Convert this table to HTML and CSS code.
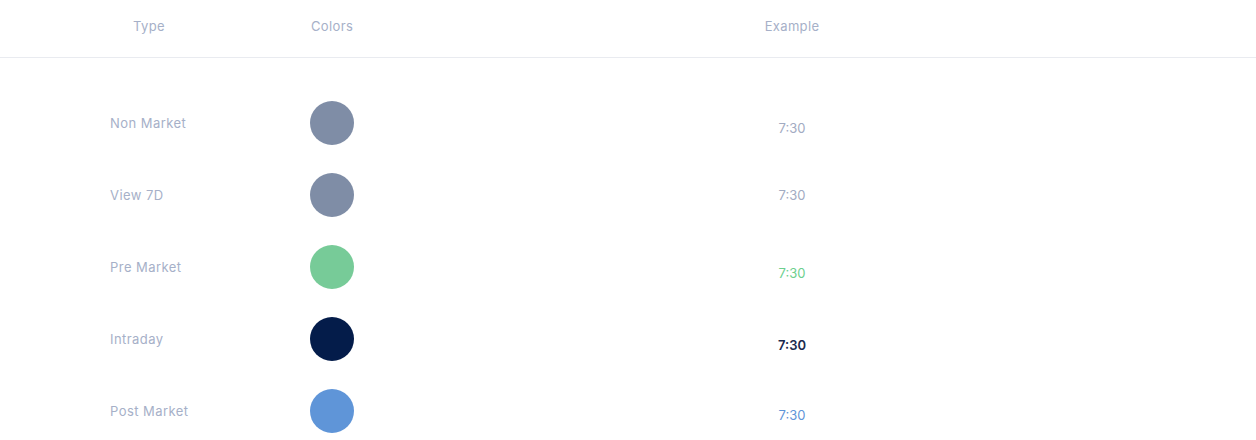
FILE: index.html
```html
<!DOCTYPE html>
<html>
<head>
<meta charset="utf-8">
<link rel="stylesheet" href="styles.css">
</head>
<body>
<div class="table">
  <div class="head">
    <div class="th th-type">Type</div>
    <div class="th th-colors">Colors</div>
    <div class="th th-example">Example</div>
  </div>
  <div class="body">
    <div class="row">
      <div class="label">Non Market</div>
      <div class="swatch-cell"><span class="dot gray"></span></div>
      <div class="example t-gray off-5">7:30</div>
    </div>
    <div class="row">
      <div class="label">View 7D</div>
      <div class="swatch-cell"><span class="dot gray"></span></div>
      <div class="example t-gray off-0">7:30</div>
    </div>
    <div class="row">
      <div class="label">Pre Market</div>
      <div class="swatch-cell"><span class="dot green"></span></div>
      <div class="example t-green off-6">7:30</div>
    </div>
    <div class="row">
      <div class="label">Intraday</div>
      <div class="swatch-cell"><span class="dot navy"></span></div>
      <div class="example t-navy off-6">7:30</div>
    </div>
    <div class="row">
      <div class="label">Post Market</div>
      <div class="swatch-cell"><span class="dot blue"></span></div>
      <div class="example t-blue off-4">7:30</div>
    </div>
  </div>
</div>
</body>
</html>
```
FILE: styles.css
```css
html, body {
  margin: 0;
  padding: 0;
  background: #ffffff;
}
body {
  font-family: "Inter", "Open Sans", "Liberation Sans", sans-serif;
  width: 1256px;
  height: 440px;
  overflow: hidden;
}
.head,
.row {
  display: grid;
  grid-template-columns: 201px 150px 662px;
  padding-left: 110px;
}
.head {
  height: 58px;
  box-sizing: border-box;
  padding-top: 17px;
  border-bottom: 1px solid #e9ebf0;
}
.th {
  font-size: 13px;
  line-height: 18px;
  color: #a6b0c8;
  letter-spacing: 0.35px;
}
.th-type {
  width: 78px;
  text-align: center;
}
.th-example {
  text-align: center;
}
.body {
  padding-top: 29px;
}
.row {
  height: 72px;
  align-items: center;
}
.label {
  font-size: 13px;
  line-height: 18px;
  color: #a6b0c8;
  letter-spacing: 0.45px;
}
.swatch-cell {
  display: flex;
  align-items: center;
  margin-left: -1px;
}
.dot {
  display: block;
  width: 44px;
  height: 44px;
  border-radius: 50%;
}
.dot.gray { background: #7f8da6; }
.dot.green { background: #77cb98; }
.dot.navy { background: #041c4a; }
.dot.blue { background: #5f95d8; }
.example {
  text-align: center;
  font-size: 13px;
  line-height: 18px;
  font-weight: 500;
}
.t-gray { color: #a2abc2; font-weight: 400; }
.t-green { color: #6ccf8e; font-weight: 400; }
.t-navy { color: #1a2a4e; font-weight: 600; }
.t-blue { color: #5f95d8; font-weight: 400; }
.off-0 { padding-top: 0; }
.off-4 { padding-top: 8px; }
.off-5 { padding-top: 10px; }
.off-6 { padding-top: 12px; }
```
